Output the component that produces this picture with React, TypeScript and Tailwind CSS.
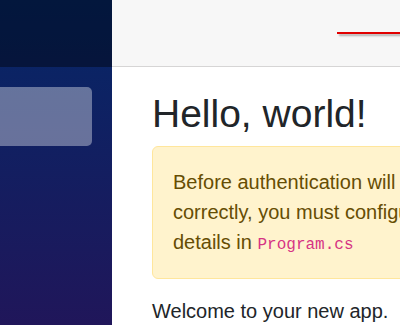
import React from 'react';

function Sidebar() {
  return (
    <div className="w-[112px] shrink-0 flex flex-col bg-[linear-gradient(180deg,#052767_0%,#20165a_100%)]">
      <div className="h-[67px] bg-black/40" />
      <nav className="pt-[20px]">
        <div className="h-[59px] w-[92px] rounded-r-[5px] bg-white/[0.37]" />
      </nav>
    </div>
  );
}

export default function App() {
  return (
    <div
      className="flex h-[325px] w-[400px] overflow-hidden bg-white text-[#212529]"
      style={{ fontFamily: '"Liberation Sans", Arial, sans-serif' }}
    >
      <Sidebar />
      <main className="flex-1 min-w-0 overflow-hidden">
        <div className="h-[67px] bg-[#f7f7f7] border-b border-[#d6d5d5] flex items-center justify-end">
          <div className="w-[63px] h-[2px] bg-[#e10000] shadow-[2px_2px_2px_rgba(0,0,0,0.3)]" />
        </div>
        <div className="pl-[40px] pt-[23px] w-[600px]">
          <h1 className="text-[39px] leading-[48px] font-normal mb-[8px] whitespace-nowrap">Hello, world!</h1>
          <div className="w-[520px] rounded-[6px] border border-[#ffe69c] bg-[#fff3cd] px-[20px] pt-[20px] pb-[18px] text-[20px] leading-[30px] text-[#664d03] whitespace-nowrap">
            Before authentication will function
            <br />
            correctly, you must configure your provider
            <br />
            details in{' '}
            <code
              className="text-[16px] text-[#d63384]"
              style={{ fontFamily: '"Liberation Mono", "DejaVu Sans Mono", monospace' }}
            >
              Program.cs
            </code>
          </div>
          <p className="mt-[17px] text-[20px] leading-[30px] whitespace-nowrap">Welcome to your new app.</p>
        </div>
      </main>
    </div>
  );
}
